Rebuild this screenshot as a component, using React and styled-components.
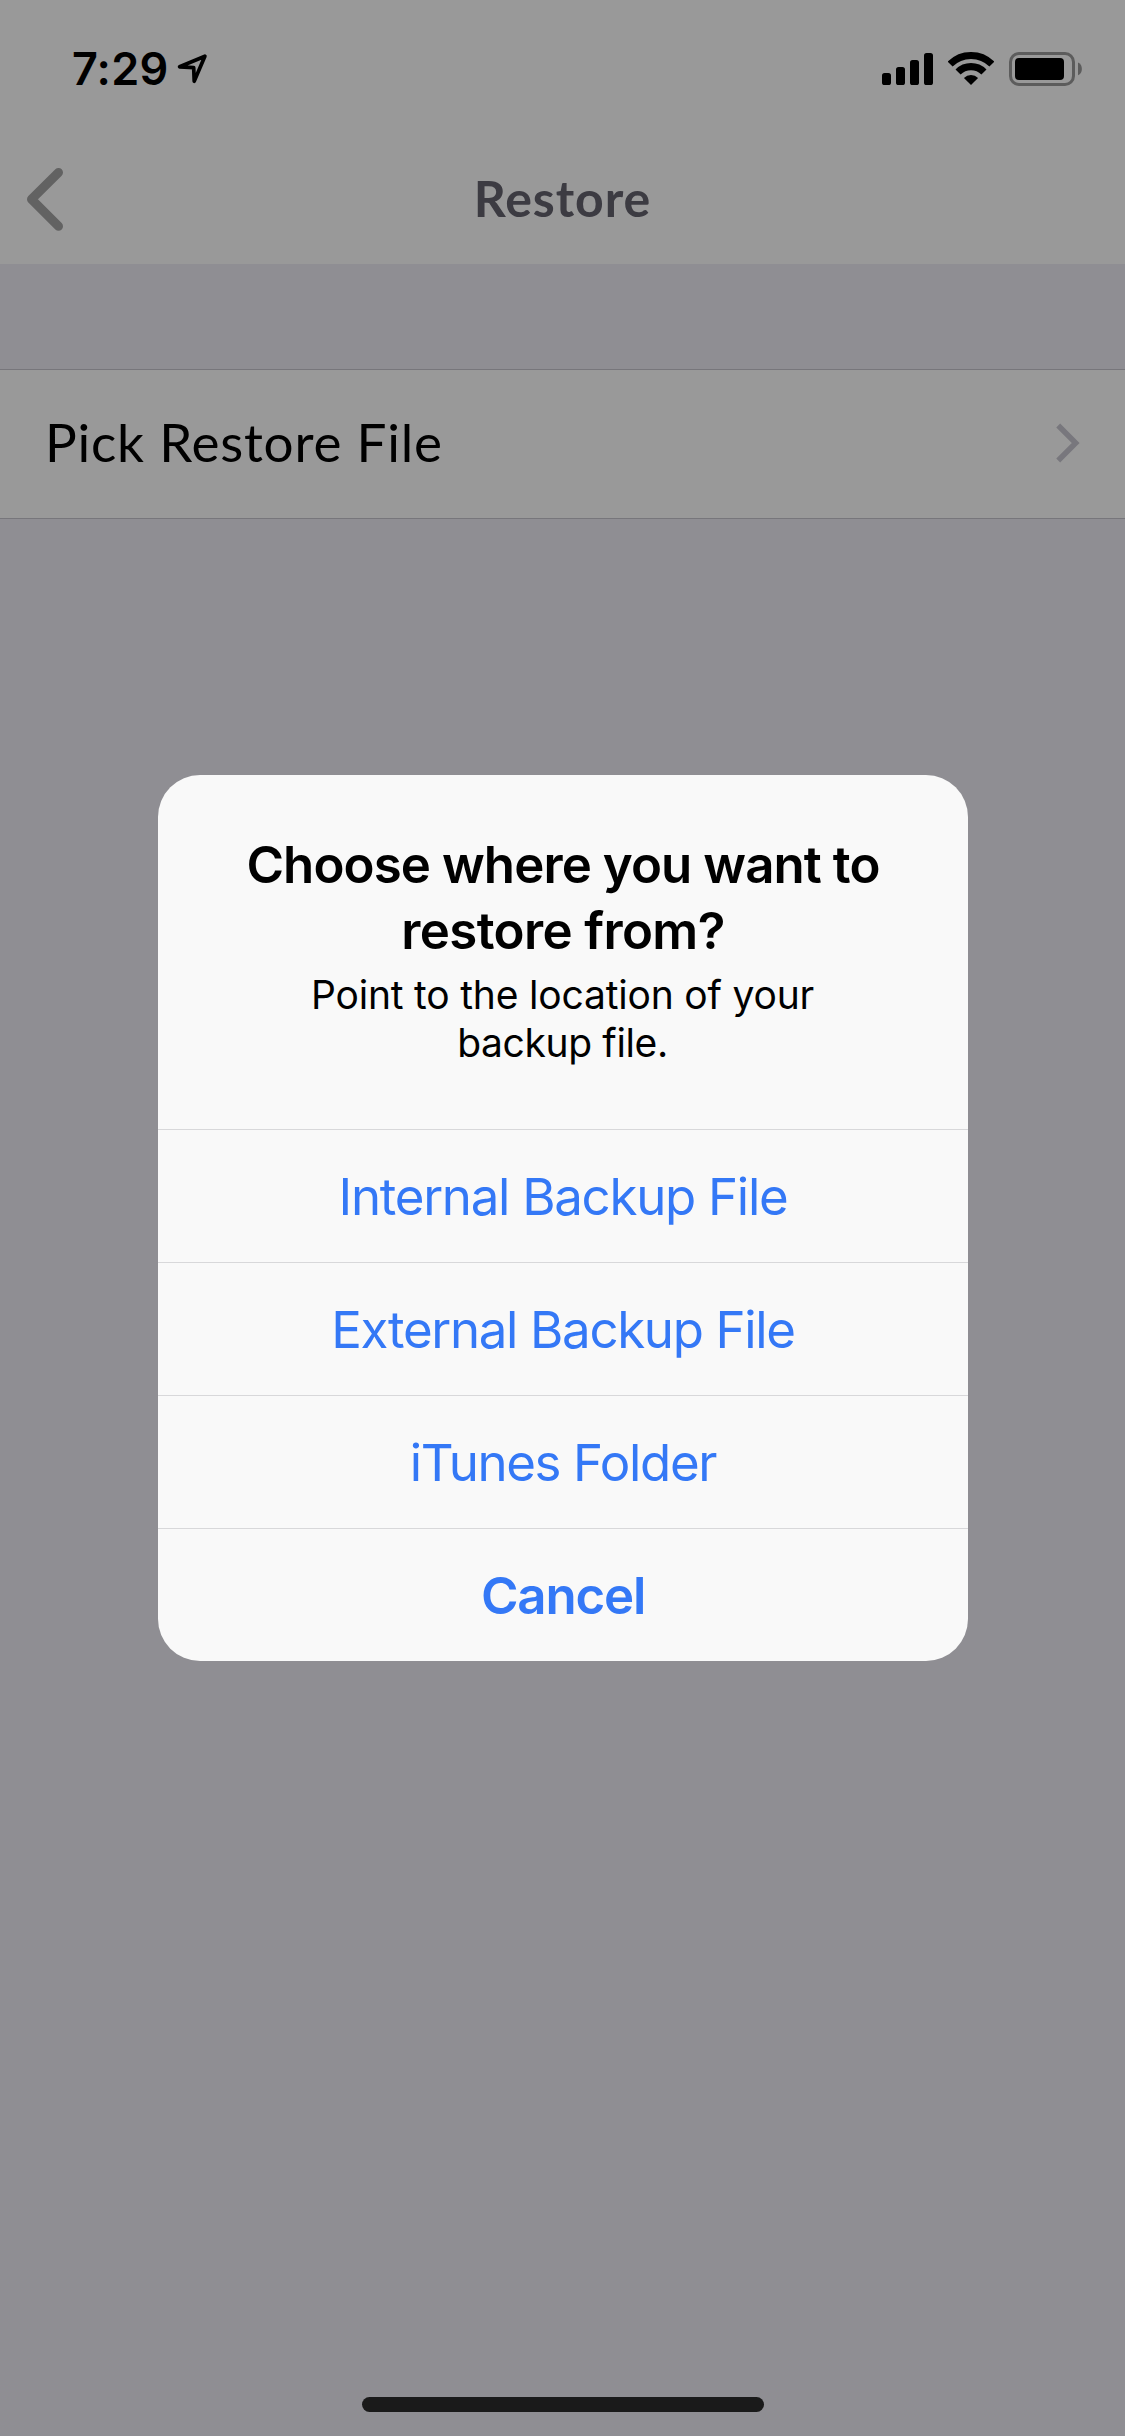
import React from 'react';
import styled, { createGlobalStyle } from 'styled-components';

const GlobalStyle = createGlobalStyle`
  * { box-sizing: border-box; }
  body { margin: 0; background: #8f8e93; }
`;

const systemFont = `Inter, "Liberation Sans", sans-serif`;
const brandFont = `Lato, "Open Sans", sans-serif`;

const Screen = styled.div`
  display: flex;
  flex-direction: column;
  width: 1125px;
  height: 2436px;
  background: #8f8e93;
  overflow: hidden;
`;

const Header = styled.header`
  display: flex;
  flex-direction: column;
  height: 264px;
  background: #999999;
`;

const StatusBar = styled.div`
  display: flex;
  align-items: center;
  justify-content: space-between;
  height: 132px;
  padding: 5px 43px 0 72px;
`;

const StatusGroup = styled.div`
  display: flex;
  align-items: center;
  gap: ${(p) => p.$gap}px;
`;

const Time = styled.span`
  padding-top: 1px;
  font: 600 45px/54px ${systemFont};
  letter-spacing: 0.2px;
  color: #000;
`;

const NavBar = styled.nav`
  display: grid;
  grid-template-columns: 200px 1fr 200px;
  align-items: center;
  height: 132px;
`;

const BackButton = styled.button`
  display: flex;
  align-items: center;
  width: 90px;
  height: 132px;
  padding: 1px 0 0 22px;
  border: 0;
  background: none;
`;

const NavTitle = styled.h1`
  margin: 0;
  padding-bottom: 1px;
  text-align: center;
  font: 700 50px/60px ${brandFont};
  letter-spacing: 0.95px;
  color: #3c3b42;
`;

const Content = styled.main`
  flex: 1;
  padding-top: 105px;
`;

const ListRow = styled.div`
  display: flex;
  align-items: center;
  justify-content: space-between;
  height: 150px;
  padding: 0 42px 3px 45px;
  border-top: 1px solid #77767b;
  border-bottom: 1px solid #77767b;
  background: #999999;
`;

const RowLabel = styled.span`
  padding-bottom: 2px;
  font: 400 53px/64px ${brandFont};
  letter-spacing: 0.79px;
  color: #000;
`;

const Footer = styled.footer`
  display: flex;
  justify-content: center;
  padding: 0 0 24px 1px;
`;

const HomeIndicator = styled.div`
  width: 402px;
  height: 15px;
  border-radius: 8px;
  background: #1a1a1a;
`;

const Overlay = styled.div`
  position: absolute;
  top: 0;
  left: 0;
  display: flex;
  align-items: center;
  justify-content: center;
  width: 1125px;
  height: 2436px;
  padding-left: 1px;
`;

const Dialog = styled.section`
  width: 810px;
  height: 886px;
  border-radius: 42px;
  background: #f9f9f9;
  overflow: hidden;
`;

const DialogHeader = styled.div`
  height: 354px;
  padding-top: 57px;
  text-align: center;
  color: #000;
`;

const DialogTitle = styled.h2`
  margin: 0 0 7px;
  font: 600 51px/66px ${systemFont};
`;

const DialogMessage = styled.p`
  margin: 0;
  padding-right: 1px;
  font: 400 39px/48px ${systemFont};
`;

const Line = styled.span`
  display: block;
  letter-spacing: ${(p) => p.$tracking}px;
`;

const Action = styled.button`
  display: flex;
  align-items: center;
  justify-content: center;
  width: 100%;
  height: 133px;
  padding: 2px 0 0;
  border: 0;
  border-top: 1px solid #d8d8da;
  background: none;
  font: ${(p) => (p.$strong ? 600 : 400)} 51px/66px ${systemFont};
  letter-spacing: ${(p) => p.$tracking}px;
  color: #3478f6;
`;

const LocationIcon = () => (
  <svg width="32" height="32" viewBox="0 0 32 32" fill="none">
    <path d="M27.9 3.2 2.6 13.8 16.7 14.7 17.2 28.3Z" stroke="#000" strokeWidth="3.7" strokeLinejoin="round" />
  </svg>
);

const SignalIcon = () => (
  <svg width="51" height="34" viewBox="0 0 51 34">
    <rect x="0" y="21" width="9" height="12" rx="2.6" />
    <rect x="14" y="15" width="9" height="18" rx="2.6" />
    <rect x="28" y="8" width="9" height="25" rx="2.6" />
    <rect x="42" y="1" width="9" height="32" rx="2.6" />
  </svg>
);

const WifiIcon = () => (
  <svg width="46" height="34" viewBox="0 0 46 34" fill="none">
    <path d="M2.14 12.14A29.5 29.5 0 0 1 43.86 12.14" stroke="#000" strokeWidth="7" />
    <path d="M10.06 20.06A18.3 18.3 0 0 1 35.94 20.06" stroke="#000" strokeWidth="7.2" />
    <path d="M23 33 15.93 25.93A10 10 0 0 1 30.07 25.93Z" fill="#000" />
  </svg>
);

const BatteryIcon = () => (
  <svg width="73" height="34" viewBox="0 0 73 34">
    <rect x="1.5" y="1.5" width="63" height="31" rx="8.5" fill="none" stroke="#5c5c5c" strokeWidth="3" />
    <rect x="6" y="6" width="49" height="22" rx="4" fill="#000" />
    <path d="M69 10.5C74.2 12.6 74.2 21.2 69 23.3Z" fill="#5c5c5c" />
  </svg>
);

const BackIcon = () => (
  <svg width="46" height="66" viewBox="0 0 46 66" fill="none">
    <path d="M36.5 6.5 9.5 33.3 36.5 60.2" stroke="#626262" strokeWidth="9" strokeLinecap="round" strokeLinejoin="round" />
  </svg>
);

const DisclosureIcon = () => (
  <svg width="28" height="42" viewBox="0 0 28 42" fill="none">
    <path d="M3.2 3.5 20.7 21 3.2 38.5" stroke="#78777d" strokeWidth="5.5" />
  </svg>
);

const actions = [
  { label: 'Internal Backup File', tracking: -1.29 },
  { label: 'External Backup File', tracking: -1.34 },
  { label: 'iTunes Folder', tracking: -1.36 },
  { label: 'Cancel', tracking: -1.18, strong: true },
];

export default function App() {
  return (
    <>
      <GlobalStyle />
      <Screen>
        <Header>
          <StatusBar>
            <StatusGroup $gap={9}>
              <Time>7:29</Time>
              <LocationIcon />
            </StatusGroup>
            <StatusGroup $gap={15}>
              <SignalIcon />
              <WifiIcon />
              <BatteryIcon />
            </StatusGroup>
          </StatusBar>
          <NavBar>
            <BackButton aria-label="Back">
              <BackIcon />
            </BackButton>
            <NavTitle>Restore</NavTitle>
          </NavBar>
        </Header>
        <Content>
          <ListRow>
            <RowLabel>Pick Restore File</RowLabel>
            <DisclosureIcon />
          </ListRow>
        </Content>
        <Footer>
          <HomeIndicator />
        </Footer>
      </Screen>
      <Overlay>
        <Dialog role="alertdialog">
          <DialogHeader>
            <DialogTitle>
              <Line $tracking={-0.91}>Choose where you want to</Line>
              <Line $tracking={-0.62}>restore from?</Line>
            </DialogTitle>
            <DialogMessage>
              <Line $tracking={-0.19}>Point to the location of your</Line>
              <Line $tracking={-0.37}>backup file.</Line>
            </DialogMessage>
          </DialogHeader>
          {actions.map((a) => (
            <Action key={a.label} $tracking={a.tracking} $strong={a.strong}>
              {a.label}
            </Action>
          ))}
        </Dialog>
      </Overlay>
    </>
  );
}
